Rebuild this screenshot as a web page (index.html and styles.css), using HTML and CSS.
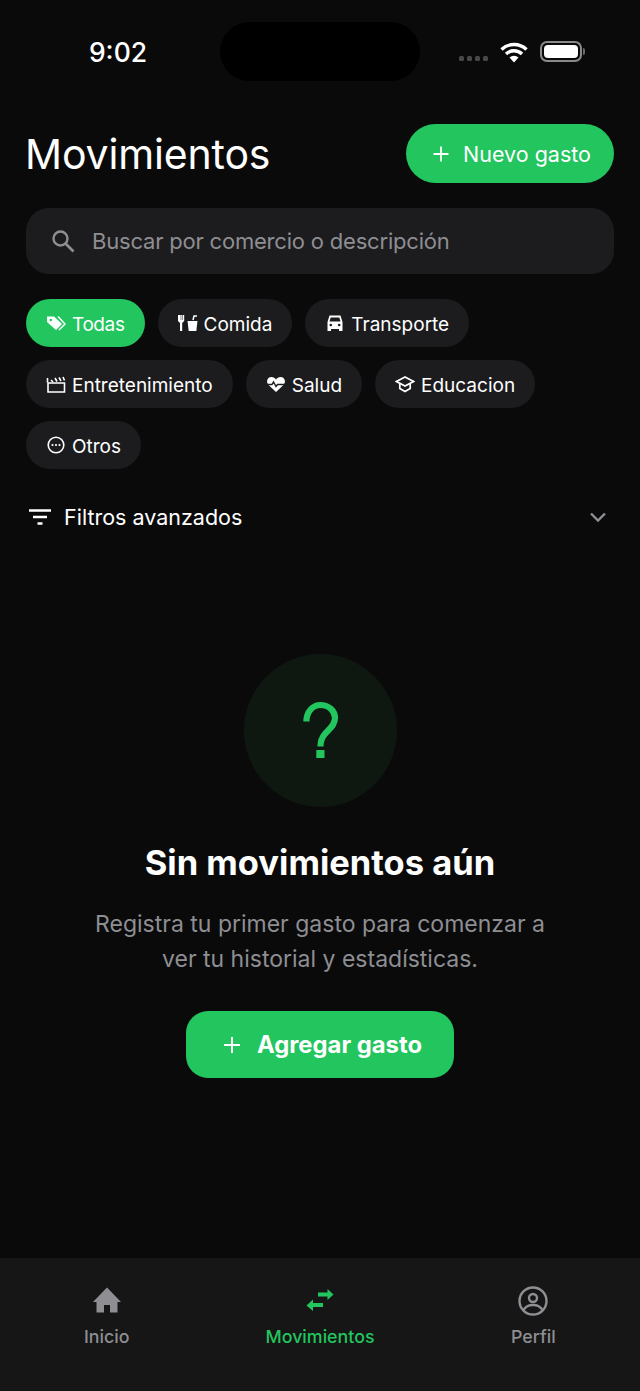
FILE: index.html
```html
<!DOCTYPE html>
<html lang="es">
<head>
  <meta charset="UTF-8">
  <meta name="viewport" content="width=device-width, initial-scale=1.0">
  <title>Movimientos</title>
  <link rel="stylesheet" href="styles.css">
</head>
<body>
  <div class="app">
    <div class="status-bar">
      <div class="status-time">9:02</div>
      <div class="island"></div>
      <div class="status-icons">
        <div class="signal"><i></i><i></i><i></i><i></i></div>
        <svg class="wifi" width="28" height="22" viewBox="0 0 28 22">
          <path d="M1.5 7.5a18 18 0 0 1 25 0M6 12a11.600 11.600 0 0 1 16 0" fill="none" stroke="#fff" stroke-width="3.400"/>
          <path d="M9.500 15.500a6.500 6.500 0 0 1 9 0L14 20.500z" fill="#fff"/>
        </svg>
        <div class="battery"><div class="battery-fill"></div></div>
      </div>
    </div>

    <main class="content">
      <div class="top-row">
        <h1 class="page-title">Movimientos</h1>
        <button class="new-btn">
          <svg width="18" height="18" viewBox="0 0 18 18"><path d="M9 1.500v15M1.500 9h15" stroke="#fff" stroke-width="1.800" fill="none"/></svg>
          Nuevo gasto
        </button>
      </div>

      <div class="search">
        <svg width="26" height="26" viewBox="0 0 26 26"><circle cx="10.500" cy="10.500" r="7" fill="none" stroke="#8e8e93" stroke-width="2.400"/><path d="M15.500 15.500l8 8" stroke="#8e8e93" stroke-width="2.600" fill="none"/></svg>
        <span class="search-text">Buscar por comercio o descripción</span>
      </div>

      <div class="chips">
        <div class="chip active">
          <svg width="20" height="20" viewBox="0 0 20 20"><path d="M1 3.500h7l8 7.500-6 6-9-8z" fill="#fff"/><path d="M12 3.500l7 7.500-6 6" fill="none" stroke="#fff" stroke-width="1.500"/><circle cx="4.800" cy="7" r="1.300" fill="#22c55e"/></svg>
          <span class="chip-label">Todas</span>
        </div>
        <div class="chip">
          <svg width="20" height="20" viewBox="0 0 20 20"><path d="M0 2v6l2 2v8h2.200v-8l2-2V2H5v5h-.5V2H3.200v5h-.5V2z" fill="#fff"/><path d="M9.500 8h10l-1.200 10h-7.600z" fill="#fff"/><path d="M15 7l1-4h3" fill="none" stroke="#fff" stroke-width="1.500"/></svg>
          <span class="chip-label">Comida</span>
        </div>
        <div class="chip">
          <svg width="20" height="20" viewBox="0 0 20 20"><path d="M4.500 2.500h11l2 6.500v9h-3.500v-2H6v2H2.500V9z" fill="#fff"/><path d="M5.700 4.500h8.600l1.200 4h-11z" fill="#1c1c1e"/><circle cx="5.800" cy="12" r="1.300" fill="#1c1c1e"/><circle cx="14.200" cy="12" r="1.300" fill="#1c1c1e"/></svg>
          <span class="chip-label">Transporte</span>
        </div>
        <div class="chip">
          <svg width="20" height="20" viewBox="0 0 20 20"><path d="M2 9h16.500v9H2z" fill="none" stroke="#fff" stroke-width="1.600"/><path d="M1.500 8.500V4M5 6l2 2M9 4l2 3.500M13 3.500l2 3.500M17 3l1.500 3.500" fill="none" stroke="#fff" stroke-width="1.600"/></svg>
          <span class="chip-label">Entretenimiento</span>
        </div>
        <div class="chip">
          <svg width="20" height="20" viewBox="0 0 20 20"><path d="M10 18L2.500 11C-.500 7.500 1.500 3 5.500 3c2 0 3.500 1 4.500 2.500C11 4 12.500 3 14.500 3c4 0 6 4.500 3 8z" fill="#fff"/><path d="M.500 10.500h5.500l1.500-2.500 2.500 4.500 1.500-2h8" fill="none" stroke="#1c1c1e" stroke-width="1.400"/></svg>
          <span class="chip-label">Salud</span>
        </div>
        <div class="chip">
          <svg width="20" height="20" viewBox="0 0 20 20"><path d="M10 3L1.500 7.500 10 12l8.500-4.500z" fill="none" stroke="#fff" stroke-width="1.700"/><path d="M4.800 10v4.500L10 17.500l5.200-3V10" fill="none" stroke="#fff" stroke-width="1.700"/></svg>
          <span class="chip-label">Educacion</span>
        </div>
        <div class="chip">
          <svg width="20" height="20" viewBox="0 0 20 20"><circle cx="10" cy="10" r="7.800" fill="none" stroke="#fff" stroke-width="1.600"/><circle cx="6.500" cy="10" r="1.100" fill="#fff"/><circle cx="10" cy="10" r="1.100" fill="#fff"/><circle cx="13.500" cy="10" r="1.100" fill="#fff"/></svg>
          <span class="chip-label">Otros</span>
        </div>
      </div>

      <div class="filters">
        <svg width="24" height="18" viewBox="0 0 24 18"><path d="M1 2.500h22M5 9h14M9.500 15.500h5" stroke="#fff" stroke-width="2.400" fill="none"/></svg>
        <span class="filters-label">Filtros avanzados</span>
        <svg class="chevron" width="18" height="12" viewBox="0 0 18 12"><path d="M2 2.500l7 7 7-7" stroke="#8e8e93" stroke-width="2.400" fill="none"/></svg>
      </div>

      <div class="empty">
        <div class="empty-circle">
          <svg width="40" height="60" viewBox="0 0 40 60"><path d="M6.400 20.500C6.400 11 12.500 4 20.500 4C29 4 35 10 35 17C35 24.500 29 28 24.500 33.500C22 36.500 20.500 39.500 20.500 45.500" fill="none" stroke="#22c55e" stroke-width="6.200"/><path d="M16.300 49h8.200v8h-8.200z" fill="#22c55e"/></svg>
        </div>
        <h2 class="empty-title">Sin movimientos aún</h2>
        <p class="empty-text">Registra tu primer gasto para comenzar a ver tu historial y estadísticas.</p>
        <button class="add-btn">
          <svg width="20" height="20" viewBox="0 0 20 20"><path d="M10 2v16M2 10h16" stroke="#fff" stroke-width="2" fill="none"/></svg>
          Agregar gasto
        </button>
      </div>
    </main>

    <nav class="tabbar">
      <div class="tab">
        <svg width="30" height="30" viewBox="0 0 30 30"><path d="M15 1.500L1 16h3.500v10.500h7.500V19h6v7.500h7.500V16H29z" fill="#8e8e93"/></svg>
        <span>Inicio</span>
      </div>
      <div class="tab current">
        <svg width="30" height="30" viewBox="0 0 30 30"><path d="M13 6.500h9.500V3l6 5.500-6 5.500v-3.500H13z" fill="#22c55e"/><path d="M18 17H8v-3.500l-6.500 6 6.500 5.500V21h10z" fill="#22c55e"/></svg>
        <span>Movimientos</span>
      </div>
      <div class="tab">
        <svg width="30" height="30" viewBox="0 0 30 30"><circle cx="15" cy="15" r="13.500" fill="none" stroke="#8e8e93" stroke-width="2.400"/><circle cx="15" cy="12" r="4" fill="none" stroke="#8e8e93" stroke-width="2.400"/><path d="M5.500 24c2-3.500 5.500-5 9.500-5s7.500 1.500 9.500 5" fill="none" stroke="#8e8e93" stroke-width="2.400"/></svg>
        <span>Perfil</span>
      </div>
    </nav>
  </div>
</body>
</html>
```

FILE: styles.css
```css
* {
  box-sizing: border-box;
}
html, body {
  margin: 0;
  padding: 0;
}
body {
  font-family: Inter, "Noto Sans", sans-serif;
  background-color: #0a0a0a;
  color: #fff;
}
button {
  font-family: inherit;
  border: none;
  color: #fff;
  background-color: #22c55e;
  display: flex;
  align-items: center;
}
.app {
  width: 640px;
  height: 1391px;
  display: flex;
  flex-direction: column;
}
.status-bar {
  height: 124px;
  padding-top: 22px;
  display: grid;
  grid-template-columns: 220px 200px 220px;
  align-items: start;
}
.status-time {
  font-size: 26.500px;
  font-weight: 500;
  line-height: 60px;
  text-align: center;
  padding-left: 16px;
  width: 220px;
}
.island {
  height: 59px;
  background-color: #000;
  border-radius: 30px;
}
.status-icons {
  height: 59px;
  display: flex;
  align-items: center;
  padding-left: 39px;
}
.signal {
  display: flex;
  gap: 3px;
  margin-top: 13px;
  margin-right: 12px;
}
.signal i {
  display: block;
  width: 5px;
  height: 5px;
  border-radius: 1.500px;
  background-color: #48484a;
}
.wifi {
  margin-right: 12px;
  margin-top: 2px;
}
.battery {
  width: 42px;
  height: 21px;
  border: 2px solid #8a8a8a;
  border-radius: 7px;
  padding: 2px;
  position: relative;
}
.battery::after {
  content: "";
  position: absolute;
  right: -4.500px;
  top: 5px;
  width: 2px;
  height: 7px;
  background-color: #6a6a6a;
  border-radius: 0 2px 2px 0;
}
.battery-fill {
  height: 100%;
  background-color: #fff;
  border-radius: 4px;
}
.content {
  flex: 1;
  padding: 0 26px;
}
.top-row {
  display: flex;
  justify-content: space-between;
  align-items: center;
  height: 59px;
}
.page-title {
  margin: 0 0 0 -1px;
  font-size: 41px;
  font-weight: 400;
  letter-spacing: -0.150px;
}
.new-btn {
  height: 59px;
  width: 208px;
  border-radius: 30px;
  padding-left: 26px;
  gap: 13px;
  font-size: 21.500px;
}
.search {
  margin-top: 25px;
  height: 66px;
  background-color: #1c1c1e;
  border-radius: 23px;
  display: flex;
  align-items: center;
  padding-left: 25px;
  gap: 16px;
}
.search svg {
  margin-left: -1px;
}
.search-text {
  font-size: 22px;
  letter-spacing: -0.200px;
  color: #8e8e93;
}
.chips {
  margin-top: 25px;
  display: flex;
  flex-wrap: wrap;
  gap: 13px;
}
.chip {
  height: 48px;
  border-radius: 24px;
  background-color: #1c1c1e;
  padding: 0 20px;
  display: flex;
  align-items: center;
  gap: 6px;
  font-size: 19px;
}
.chip-label {
  padding-top: 2px;
}
.chip.active {
  background-color: #22c55e;
  letter-spacing: -0.400px;
}
.filters {
  margin-top: 28px;
  height: 40px;
  display: flex;
  align-items: center;
  padding-left: 2px;
}
.filters-label {
  font-size: 21.500px;
  margin-left: 12px;
  flex: 1;
}
.chevron {
  margin-right: 7px;
}
.empty {
  margin-top: 117px;
  display: flex;
  flex-direction: column;
  align-items: center;
}
.empty-circle {
  width: 153px;
  height: 153px;
  border-radius: 50%;
  background-color: #0e1811;
  display: flex;
  align-items: center;
  justify-content: center;
}
.empty-title {
  margin: 34px 0 0;
  font-size: 34.500px;
  line-height: 44px;
  font-weight: 700;
}
.empty-text {
  margin: 22px 0 0;
  width: 470px;
  font-size: 23px;
  line-height: 35px;
  color: #8e8e93;
  text-align: center;
}
.add-btn {
  margin-top: 34px;
  height: 67px;
  width: 268px;
  border-radius: 22px;
  padding-left: 36px;
  gap: 15px;
  font-size: 23.800px;
  font-weight: 700;
}
.tabbar {
  height: 133px;
  background-color: #161616;
  display: grid;
  grid-template-columns: repeat(3, 1fr);
}
.tab {
  padding-top: 28px;
  display: flex;
  flex-direction: column;
  align-items: center;
  gap: 10px;
  color: #8e8e93;
  font-size: 17.800px;
  font-weight: 500;
}
.tab.current {
  color: #22c55e;
}
```
